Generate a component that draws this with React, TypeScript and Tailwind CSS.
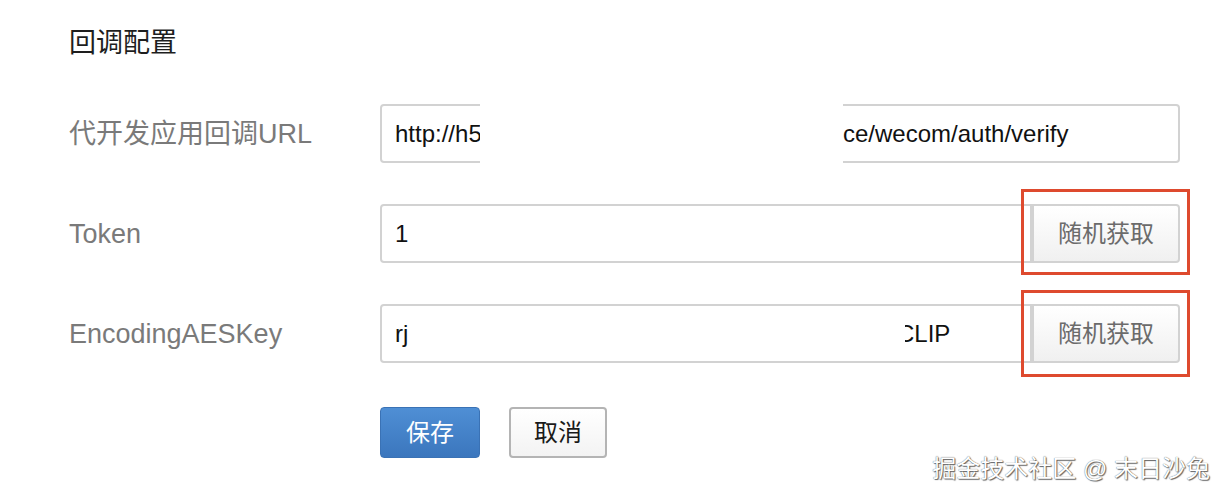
import React from "react";

const FONT = 'font-["Liberation_Sans","Noto_Sans_CJK_SC",sans-serif]';

function Highlight({ top, bottom }: { top: number; bottom: number }) {
  // red annotation box drawn around the button
  return (
    <div
      className="pointer-events-none absolute -left-[11px] -right-[10px] border-[3px] border-[#de4a2e]"
      style={{ top: -top, bottom: -bottom }}
    />
  );
}

function RandomButton({ top, bottom }: { top: number; bottom: number }) {
  return (
    <div className="relative h-[59px] w-[148px]">
      <button className="h-full w-full rounded-r-[4px] border-2 border-[#d2d2d2] bg-gradient-to-b from-white to-[#f0f0f0] text-[24px] text-[#6b6b6b]">
        随机获取
      </button>
      <Highlight top={top} bottom={bottom} />
    </div>
  );
}

function Row({ label, children }: { label: string; children: React.ReactNode }) {
  return (
    <div className="flex items-center">
      <div className="w-[311px] text-[27px] leading-[32px] text-[#7a7a7a]">{label}</div>
      <div className="flex">{children}</div>
    </div>
  );
}

export default function App() {
  return (
    <div className={`relative h-[502px] w-[1228px] overflow-hidden bg-white ${FONT}`}>
      <div className="pl-[69px] pt-[27px]">
        <h2 className="text-[27px] leading-[32px] text-[#1e1e1e]">回调配置</h2>

        <div className="mt-[45px] flex flex-col gap-[41px]">
          <Row label="代开发应用回调URL">
            <div className="relative flex h-[59px] w-[800px] items-center rounded-[4px] border-2 border-[#d2d2d2] pl-[13px] text-[24px] text-[#111]">
              <span className="w-[86px] overflow-hidden whitespace-nowrap">http://h5.</span>
              <span className="ml-[362px] whitespace-nowrap">ce/wecom/auth/verify</span>
              {/* redacted part of the url */}
              <div className="absolute -bottom-[4px] -top-[4px] left-[98px] w-[363px] bg-white" />
            </div>
          </Row>

          <Row label="Token">
            <div className="flex h-[59px] w-[652px] items-center rounded-l-[4px] border-2 border-[#d2d2d2] pl-[13px] text-[24px] text-[#111]">
              1
            </div>
            <RandomButton top={15} bottom={12} />
          </Row>

          <Row label="EncodingAESKey">
            <div className="flex h-[59px] w-[652px] items-center rounded-l-[4px] border-2 border-[#d2d2d2] pl-[13px] text-[24px] text-[#111]">
              <span>rj</span>
              <div className="ml-[497px] flex w-[45px] justify-end overflow-hidden whitespace-nowrap">
                <span>CLIP</span>
              </div>
            </div>
            <RandomButton top={14} bottom={14} />
          </Row>
        </div>

        <div className="ml-[311px] mt-[44px] flex gap-[29px]">
          <button className="h-[51px] w-[100px] rounded-[4px] border border-[#3a72b5] bg-gradient-to-b from-[#4f8fd5] to-[#3b76bd] text-[24px] text-white">
            保存
          </button>
          <button className="h-[51px] w-[98px] rounded-[4px] border-2 border-[#b4b4b4] bg-gradient-to-b from-white to-[#f3f3f3] text-[24px] text-[#1a1a1a]">
            取消
          </button>
        </div>
      </div>

      <div className="absolute bottom-[19px] right-[18px] text-[24px] leading-[28px] text-white [text-shadow:0_0_1px_#444,1px_1px_1px_#666]">
        掘金技术社区 @ 末日沙兔
      </div>
    </div>
  );
}
